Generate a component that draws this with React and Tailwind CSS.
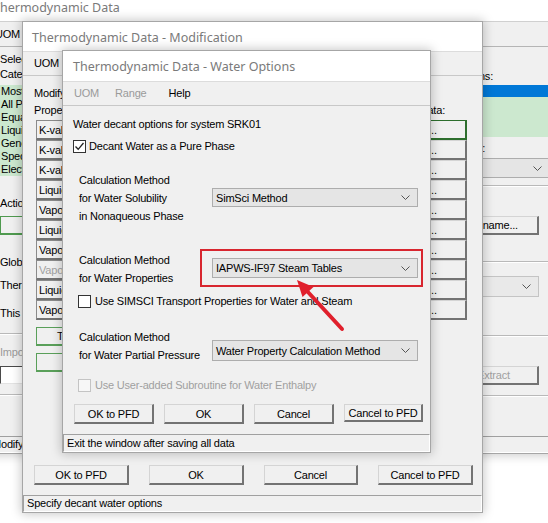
import React from 'react';

const sans = "font-['Liberation_Sans',Arial,sans-serif] text-[11px] tracking-[-0.2px] text-black";
const ui = "font-['Noto_Sans','Open_Sans',sans-serif] text-[12.5px] text-[#7a7a7a] pt-[3px]";
const win = 'absolute flex flex-col bg-[#f0f0f0] shadow-[0_0_0_1px_#a6a6a6,0_0_10px_2px_rgba(0,0,0,0.22)]';

function classNames(...classes) {
  return classes.filter(Boolean).join(' ');
}

function Chevron() {
  return (
    <svg width="9" height="5" viewBox="0 0 9 5" className="text-[#555555]">
      <polyline points="0.5,0.5 4.5,4.5 8.5,0.5" fill="none" stroke="currentColor" strokeWidth="1" />
    </svg>
  );
}

function Combo({ value, className = '' }) {
  return (
    <div
      className={`flex items-center justify-between border border-[#adadad] bg-[#e5e5e5] pl-[3px] pr-[7px] ${className}`}
    >
      <span>{value}</span>
      <Chevron />
    </div>
  );
}

function Btn({ children, className = '', disabled }) {
  return (
    <div
      className={classNames(
        'flex items-center justify-center bg-[#f0f0f0] border-t border-l border-t-[#d4d4d4] border-l-[#d4d4d4] border-r-2 border-b-2 border-r-[#737373] border-b-[#737373] overflow-hidden',
        disabled && 'text-[#a0a0a0]',
        className,
      )}
    >
      {children}
    </div>
  );
}

function Check({ checked, disabled }) {
  return (
    <div
      className={classNames(
        'w-[13px] h-[13px] flex items-center justify-center border',
        disabled ? 'border-[#c4c4c4] bg-[#f7f7f7]' : 'border-[#333333] bg-white',
      )}
    >
      {checked && (
        <svg width="11" height="11" viewBox="0 0 11 11">
          <polyline points="1.5,5.5 4.2,8.3 9.5,2" fill="none" stroke="#222" strokeWidth="1.3" />
        </svg>
      )}
    </div>
  );
}

function Etched({ className = '' }) {
  return <div className={`h-[2px] border-t border-t-[#b9b9b9] border-b border-b-white ${className}`} />;
}

function StatusBar({ children, className = '' }) {
  return (
    <div
      className={`flex items-center pl-[3px] border-t border-l border-t-[#a0a0a0] border-l-[#a0a0a0] border-r border-b border-r-white border-b-white whitespace-nowrap overflow-hidden ${className}`}
    >
      {children}
    </div>
  );
}

// back window, only the left and right slivers show
function MainWindow() {
  const cats = ['Most Used', 'All Predefined', 'Equation of State', 'Liquid Activity', 'Generalized', 'Special', 'Electrolytes'];
  return (
    <div className={`${win} left-[-12px] top-[-8px] w-[572px] h-[461px]`}>
      <div className={`${ui} h-[30px] bg-white flex items-center pl-[5px] border-b border-[#d0d0d0]`}>
        Thermodynamic Data
      </div>
      <div className={`${sans} h-[25px] flex items-center pl-[7px] text-[#7a7a7a] border-b border-[#b5b5b5]`}>UOM</div>
      <div className={`${sans} h-[389px] flex leading-[14px]`}>
        <div className="w-[200px] pl-[12px] flex flex-col whitespace-nowrap">
          <div className="mt-[5px]">Select from:</div>
          <div className="mt-[1px]">Category:</div>
          <div className="mt-[4px] h-[91px] bg-[#cce8cf] leading-[13px] pl-[1px]">
            {cats.map((c) => (
              <div key={c}>{c}</div>
            ))}
          </div>
          <div className="mt-[20px]">Action:</div>
          <Btn className="mt-[6px] h-[19px] w-[120px] !border-[#4f9a4f]" />
          <div className="mt-[20px]">Global</div>
          <div className="mt-[9px]">Thermo</div>
          <div className="mt-[14px]">This</div>
          <Etched className="mt-[13px]" />
          <div className="mt-[10px] text-[#9a9a9a]">Import</div>
          <div className="mt-[7px] h-[18px] w-[120px] bg-white border-t border-l border-t-[#4a4a4a] border-l-[#4a4a4a] border-r border-b border-r-[#e3e3e3] border-b-[#e3e3e3]" />
          <Etched className="mt-[10px]" />
        </div>
        <div className="ml-auto w-[200px] flex flex-col whitespace-nowrap">
          <div className="mt-[22px] pr-[67px] text-right">Options:</div>
          <div className="mt-[2px] mr-[10px] h-[52px] flex flex-col">
            <div className="h-[12px] bg-[#0078d7]" />
            <div className="flex-1 bg-[#cce8cf]" />
          </div>
          <div className="mt-[4px] pr-[75px] text-right">Method:</div>
          <Combo value="" className="mt-[3px] mr-[10px] h-[20px]" />
          <Etched className="mt-[7px]" />
          <Btn className="mt-[29px] mr-[21px] self-end h-[19px] w-[90px]">Rename...</Btn>
          <Etched className="mt-[26px]" />
          <Combo value="" className="mt-[13px] mr-[21px] h-[21px] !bg-[#e9e9e9] !border-[#c4c4c4]" />
          <Etched className="mt-[38px]" />
          <Btn disabled className="mt-[29px] mr-[21px] self-end h-[19px] w-[90px]">Extract</Btn>
          <Etched className="mt-[10px]" />
        </div>
      </div>
      <StatusBar className={`${sans} h-[17px]`}>Modify the selected system</StatusBar>
    </div>
  );
}

function ModWindow() {
  const rows = [
    ['K-value', false],
    ['K-value', false],
    ['K-value', false],
    ['Liquid', false],
    ['Vapor', false],
    ['Liquid', false],
    ['Vapor', false],
    ['Vapor', true],
    ['Liquid', false],
    ['Vapor', false],
  ];
  return (
    <div className={`${win} left-[23px] top-[22px] w-[459px] h-[490px]`}>
      <div className={`${ui} h-[30px] bg-white flex items-center pl-[9px] border-b border-[#dcdcdc]`}>
        Thermodynamic Data - Modification
      </div>
      <div className={`${sans} h-[24px] flex items-center pl-[11px] text-[#8a8a8a] border-b border-[#c8c8c8]`}>UOM</div>
      <div className={`${sans} flex-1 flex flex-col leading-[14px] whitespace-nowrap`}>
        <div className="mt-[10px] pl-[11px]">Modify</div>
        <div className="mt-[3px] flex justify-between pl-[11px] pr-[37px]">
          <span>Property</span>
          <span>Data:</span>
        </div>
        <div className="mt-[3px] flex flex-col">
          {rows.map(([label, off], i) => (
            <div key={i} className="h-[20px] flex justify-between pl-[13px] pr-[15px]">
              <Btn disabled={off} className="w-[120px] !justify-start pl-[2px] !border-l-[#8a8a8a] !border-t-[#8a8a8a]">
                {label}
              </Btn>
              <Btn className={classNames('w-[68px]', i === 0 && '!border-[#2d6e2d]')}>...</Btn>
            </div>
          ))}
        </div>
        <Btn className="mt-[7px] ml-[13px] h-[19px] w-[150px] !justify-start pl-[20px] !border-[#5aa05a]">Transport</Btn>
        <Btn className="mt-[7px] ml-[13px] h-[19px] w-[150px] !border-[#5aa05a]" />
        <div className="mt-auto mb-[10px] flex gap-[20px] pl-[11px]">
          <Btn className="h-[20px] w-[95px]">OK to PFD</Btn>
          <Btn className="h-[20px] w-[95px]">OK</Btn>
          <Btn className="h-[20px] w-[94px]">Cancel</Btn>
          <Btn className="h-[20px] w-[95px]">Cancel to PFD</Btn>
        </div>
      </div>
      <StatusBar className={`${sans} h-[17px]`}>Specify decant water options</StatusBar>
    </div>
  );
}

function WaterWindow() {
  return (
    <div className={`${win} left-[63px] top-[51px] w-[367px] h-[401px]`}>
      <div className={`${ui} h-[31px] bg-white flex items-center pl-[10px] border-b border-[#dcdcdc]`}>
        Thermodynamic Data - Water Options
      </div>
      <div className={`${sans} h-[24px] flex items-center pl-[11px] border-b border-[#c8c8c8]`}>
        <span className="text-[#9a9a9a]">UOM</span>
        <span className="ml-[16px] text-[#9a9a9a]">Range</span>
        <span className="ml-[22px]">Help</span>
      </div>
      <div className={`${sans} flex-1 flex flex-col leading-[14px] whitespace-nowrap`}>
        <div className="mt-[11px] pl-[10px]">Water decant options for system SRK01</div>
        <div className="mt-[8px] h-[14px] pl-[10px] flex items-center gap-[3px]">
          <Check checked />
          <span>Decant Water as a Pure Phase</span>
        </div>
        <div className="mt-[18px] flex">
          <div className="w-[149px] pl-[16px] leading-[18px]">
            <div>Calculation Method</div>
            <div>for Water Solubility</div>
            <div>in Nonaqueous Phase</div>
          </div>
          <Combo value="SimSci Method" className="mt-[17px] h-[19px] w-[206px]" />
        </div>
        <div className="mt-[26px] flex">
          <div className="w-[149px] pl-[16px] leading-[18px]">
            <div>Calculation Method</div>
            <div>for Water Properties</div>
          </div>
          <Combo value="IAPWS-IF97 Steam Tables" className="mt-[7px] h-[20px] w-[206px]" />
        </div>
        <div className="mt-[7px] h-[14px] pl-[15px] flex items-center gap-[4px]">
          <Check />
          <span>Use SIMSCI Transport Properties for Water and Steam</span>
        </div>
        <div className="mt-[20px] flex">
          <div className="w-[149px] pl-[16px] leading-[18px]">
            <div>Calculation Method</div>
            <div>for Water Partial Pressure</div>
          </div>
          <Combo value="Water Property Calculation Method" className="mt-[12px] h-[21px] w-[206px]" />
        </div>
        <div className="mt-[14px] h-[14px] pl-[15px] flex items-center gap-[4px] text-[#a0a0a0]">
          <Check disabled />
          <span>Use User-added Subroutine for Water Enthalpy</span>
        </div>
        <div className="mt-[12px] flex gap-[10px] pl-[11px]">
          <Btn className="h-[20px] w-[80px]">OK to PFD</Btn>
          <Btn className="h-[20px] w-[80px]">OK</Btn>
          <Btn className="h-[20px] w-[80px]">Cancel</Btn>
          <Btn className="h-[18px] w-[79px]">Cancel to PFD</Btn>
        </div>
      </div>
      <StatusBar className={`${sans} h-[18px]`}>Exit the window after saving all data</StatusBar>
    </div>
  );
}

export default function App() {
  return (
    <div className="relative w-[548px] h-[523px] overflow-hidden bg-white">
      <MainWindow />
      <ModWindow />
      <WaterWindow />
      {/* annotation */}
      <div className="absolute left-[200px] top-[249px] w-[223px] h-[38px] border-2 border-[#d8262f]" />
      <svg className="absolute left-0 top-0" width="548" height="523" viewBox="0 0 548 523">
        <line x1="342" y1="329" x2="307" y2="291" stroke="#e0202c" strokeWidth="4" strokeLinecap="round" />
        <polygon points="297,280 313.5,287 302.5,297" fill="#e0202c" />
      </svg>
    </div>
  );
}
